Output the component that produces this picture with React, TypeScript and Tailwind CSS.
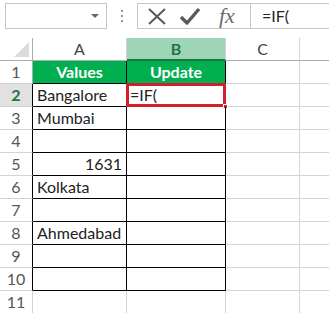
import React from 'react';

const rows: { a: string; b: string; right?: boolean }[] = [
    { a: 'Values', b: 'Update' },
    { a: 'Bangalore', b: '=IF(' },
    { a: 'Mumbai', b: '' },
    { a: '', b: '' },
    { a: '1631', b: '', right: true },
    { a: 'Kolkata', b: '' },
    { a: '', b: '' },
    { a: 'Ahmedabad', b: '' },
    { a: '', b: '' },
    { a: '', b: '' },
];

function App() {
    return (
        <div className="w-[329px] h-[313px] overflow-hidden bg-white font-['Lato','Liberation_Sans',sans-serif] text-[16px] text-[#222]">
            {/* formula bar */}
            <div className="h-[38px] flex items-start pt-[3px]">
                <div className="ml-[5px] w-[102px] h-[26px] border border-[#c6c6c6] flex items-center justify-end pr-[7px]">
                    <div className="w-0 h-0 border-l-[4px] border-r-[4px] border-t-[4px] border-l-transparent border-r-transparent border-t-[#666]" />
                </div>
                <div className="w-[30px] h-[26px] flex flex-col items-center justify-center gap-[3px]">
                    <div className="w-[2px] h-[2px] bg-[#999]" />
                    <div className="w-[2px] h-[2px] bg-[#999]" />
                    <div className="w-[2px] h-[2px] bg-[#999]" />
                </div>
                <div className="w-[113px] h-[26px] border border-r-0 border-[#c6c6c6] flex items-center">
                    <svg width="36" height="24" viewBox="0 0 36 24" className="ml-[2px]">
                        <path d="M9 5 L25 20 M25 5 L9 20" stroke="#5a5a5a" strokeWidth="2" fill="none" />
                    </svg>
                    <svg width="38" height="24" viewBox="0 0 38 24" className="ml-[1px]">
                        <path d="M4 13 L10 19 L22 5" stroke="#5a5a5a" strokeWidth="3.4" fill="none" strokeLinejoin="round" />
                    </svg>
                    <span className="ml-[4px] font-['Liberation_Serif',serif] italic text-[22px] text-[#6b6b6b] leading-none">fx</span>
                </div>
                <div className="flex-1 h-[26px] border border-r-0 border-[#c6c6c6] flex items-center pl-[11px] text-[16px] text-[#222]">
                    =IF(
                </div>
            </div>

            {/* grid */}
            <div className="grid grid-cols-[33px_94px_99px_74px_1fr] auto-rows-[23px]">
                {/* column headers */}
                <div className="border-r border-b border-[#ababab] bg-white flex items-end justify-end pr-[3px] pb-[3px]">
                    <svg width="15" height="15" viewBox="0 0 15 15">
                        <polygon points="15,0 15,15 0,15" fill="#dcdcdc" />
                    </svg>
                </div>
                <div className="border-r border-b border-[#d4d4d4] border-b-[#ababab] flex items-center justify-center text-[#444]">A</div>
                <div className="border-r border-b-2 border-[#d4d4d4] border-b-[#217346] bg-[#9fd5b7] flex items-center justify-center font-bold text-[#217346]">B</div>
                <div className="border-r border-b border-[#d4d4d4] border-b-[#ababab] flex items-center justify-center text-[#444]">C</div>
                <div className="border-b border-[#ababab]" />

                {rows.map((r, i) => {
                    const head = i === 0;
                    const sel = i === 1;
                    return (
                        <React.Fragment key={i}>
                            <div className={`border-r border-b border-[#d4d4d4] flex items-center justify-center ${sel ? 'bg-[#e1e1e1] text-[#217346] font-bold' : 'text-[#555]'} ${i === 0 ? 'border-r-[#ababab]' : 'border-r-black'}`}>
                                {i + 1}
                            </div>
                            <div className={`border-r border-b border-black px-[4px] flex items-center ${r.right ? 'justify-end' : ''} ${head ? 'bg-[#00b050] text-white font-bold justify-center' : ''}`}>
                                {r.a}
                            </div>
                            <div className={`relative border-r border-b border-black px-[3px] flex items-center ${head ? 'bg-[#00b050] text-white font-bold justify-center' : ''}`}>
                                {r.b}
                                {sel && (
                                    <>
                                        <div className="absolute left-[-1px] top-[-1px] right-[-1px] bottom-[-1px] border-[3px] border-[#d0202a]" />
                                        <div className="absolute right-[-3px] bottom-[-3px] w-[5px] h-[5px] bg-[#d0202a] border border-white" />
                                    </>
                                )}
                            </div>
                            <div className="border-r border-b border-[#d4d4d4]" />
                            <div className="border-b border-[#d4d4d4]" />
                        </React.Fragment>
                    );
                })}
                <div className="border-r border-b border-[#d4d4d4] flex items-center justify-center text-[#555]">11</div>
                <div className="border-r border-b border-[#d4d4d4]" />
                <div className="border-r border-b border-[#d4d4d4]" />
                <div className="border-r border-b border-[#d4d4d4]" />
                <div className="border-b border-[#d4d4d4]" />
            </div>
        </div>
    );
}

export default App;
